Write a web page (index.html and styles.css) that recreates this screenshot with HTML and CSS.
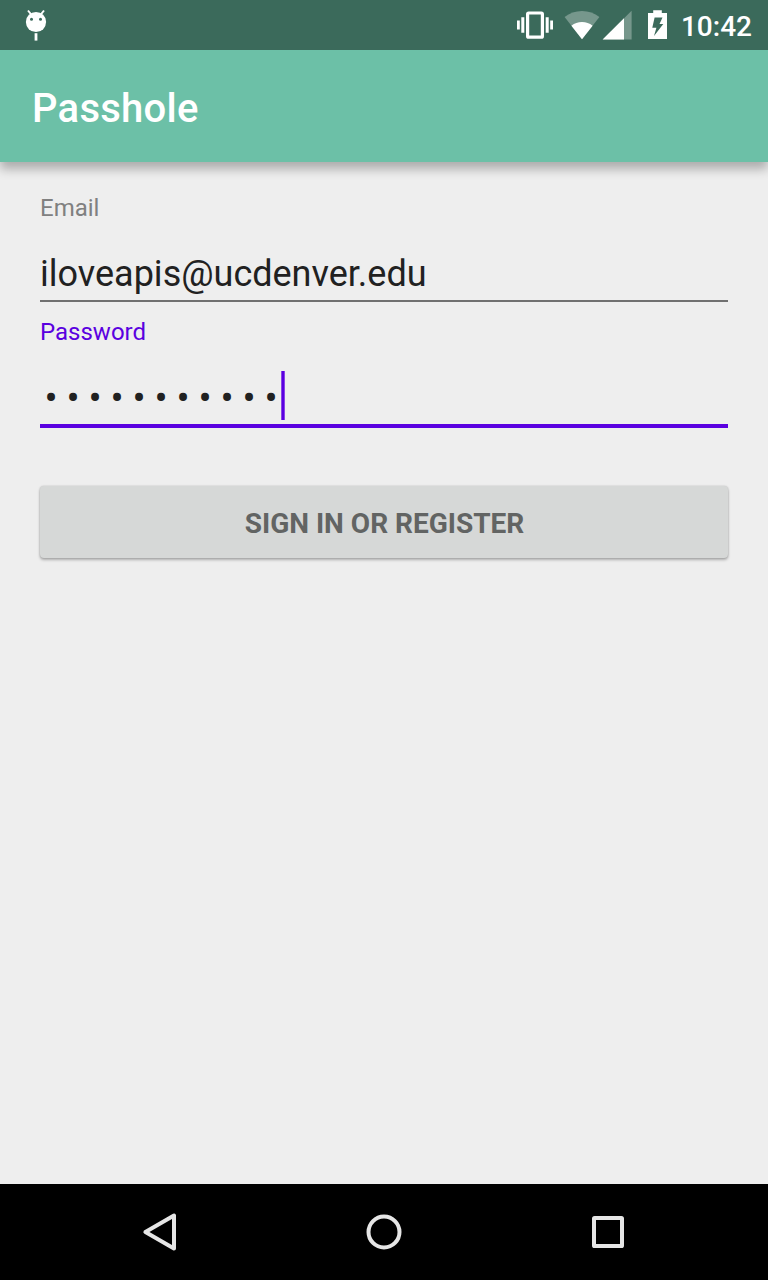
FILE: index.html
```html
<!DOCTYPE html>
<html lang="en">
<head>
<meta charset="utf-8">
<title>Passhole</title>
<link rel="stylesheet" href="styles.css">
</head>
<body>
<div class="screen">
  <header class="status-bar">
    <svg class="icon-bug" width="24" height="50" viewBox="24 0 24 50" fill="#fff">
      <path d="M28 10.5l4 5M44 10.5l-4 5" stroke="#fff" stroke-width="2"/>
      <circle cx="36" cy="22" r="10.1"/>
      <circle cx="31.5" cy="19.3" r="1.5" fill="#3b6a5b"/>
      <circle cx="40.5" cy="19.3" r="1.5" fill="#3b6a5b"/>
      <rect x="34.6" y="33.2" width="2.8" height="7.4"/>
    </svg>
    <div class="status-right">
      <svg width="156" height="50" viewBox="516 0 156 50" fill="#fff">
        <rect x="527.6" y="13" width="14.8" height="24.2" rx="1" fill="none" stroke="#fff" stroke-width="3.2"/>
        <path d="M521.3 17.3h3v15.4h-3zM517 20.4h2.8v9.2H517zM545.7 17.3h3v15.4h-3zM550.2 20.4h2.8v9.2h-2.8z"/>
        <path d="M564.6 17.1Q572 11 582 11t17.4 6.1L582 39.2z" opacity=".3"/>
        <path d="M571.4 25.7Q576 22 582 22t10.6 3.7L582 39.2z"/>
        <path d="M602.6 39.5h29V10.8z" opacity=".3"/>
        <path d="M602.6 39.5H624V18.3z"/>
        <path fill-rule="evenodd" d="M653.2 10.3h8.6v2.8h5.2V39h-19V13.1h5.2zM654.6 17.5l-2.3 10.2h4.1L654 36l9.3-12h-3.8l3-6.5z"/>
      </svg>
      <span class="clock">10:42</span>
    </div>
  </header>
  <div class="app-bar"><h1 class="title">Passhole</h1></div>
  <main class="form">
    <div class="label">Email</div>
    <div class="field">iloveapis@ucdenver.edu</div>
    <div class="label label-active">Password</div>
    <div class="field field-active"><span class="dots">•••••••••••</span><span class="caret"></span></div>
    <button class="submit">SIGN IN OR REGISTER</button>
  </main>
  <nav class="nav-bar">
    <svg width="48" height="48" viewBox="136 1208 48 48"><path d="M174 1215.6v32.8L145.4 1232z"/></svg>
    <svg width="48" height="48" viewBox="360 1208 48 48"><circle cx="384" cy="1232" r="15.5"/></svg>
    <svg width="48" height="48" viewBox="584 1208 48 48"><rect x="594" y="1218" width="28" height="28" rx=".6"/></svg>
  </nav>
</div>
</body>
</html>
```
FILE: styles.css
```css
* { box-sizing: border-box; }
body { margin: 0; font-family: Roboto, sans-serif; }
svg { display: block; }
.screen { display: flex; flex-direction: column; width: 768px; height: 1280px; background: #eee; overflow: hidden; }
.status-bar { display: flex; z-index: 1; justify-content: space-between; height: 50px; padding: 0 16px 0 24px; background: #3b6a5b; color: #fff; }
.status-right { display: flex; gap: 9px; }
.clock { font-size: 28px; font-weight: 500; line-height: 53px; white-space: nowrap; }
.app-bar { display: flex; align-items: center; height: 112px; padding: 6px 32px 0; background: #6cc0a7; box-shadow: 0 7px 10px rgba(0, 0, 0, .28); }
.title { margin: 0; color: #fff; font-size: 40px; font-weight: 500; line-height: 48px; letter-spacing: .25px; }
.form { display: flex; flex: 1; flex-direction: column; padding: 32px 40px; }
.label { height: 28px; color: #808080; font-size: 24px; line-height: 28px; }
.label-active { margin-top: 16px; color: #5a00e0; }
.field { height: 80px; padding-top: 31px; border-bottom: 2px solid #707070; color: #212121; font-size: 36px; line-height: 42px; white-space: nowrap; }
.field-active { display: flex; height: 82px; padding-top: 25px; border-bottom: 4px solid #5a00e0; }
.dots { width: 241px; padding-left: 4.5px; font-size: 39px; line-height: 54px; letter-spacing: 8.83px; }
.caret { width: 4px; height: 49px; background: linear-gradient(90deg, #8a45e8 0 1px, #5a00e0 1px 3px, #8a45e8 3px); }
.submit { height: 72px; margin: 58px 0 0; padding: 4px 0 0 1px; border: 0; border-radius: 4px; background: #d6d8d7; box-shadow: 0 2px 3px rgba(0, 0, 0, .27), 0 0 2px rgba(0, 0, 0, .2); color: #626463; font: 700 28px/40px Roboto, sans-serif; }
.nav-bar { display: flex; justify-content: center; align-items: center; gap: 176px; height: 96px; background: #000; fill: none; stroke: #e6e6e6; stroke-width: 4; stroke-linejoin: round; }
```
